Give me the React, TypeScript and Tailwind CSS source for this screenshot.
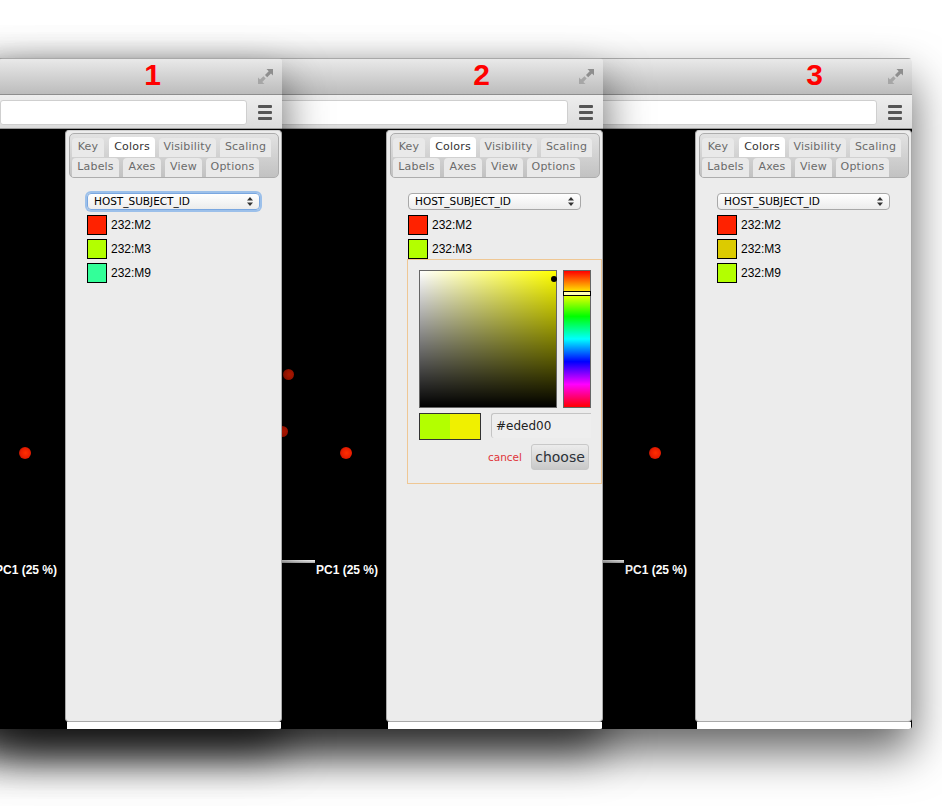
import React from "react";

const tabsTop = [
  { label: "Key", w: "w-[32px]" },
  { label: "Colors", w: "w-[46px]", active: true },
  { label: "Visibility", w: "w-[57px]" },
  { label: "Scaling", w: "w-[51px]" },
];
const tabsBottom = [
  { label: "Labels", w: "w-[47px]" },
  { label: "Axes", w: "w-[38px]" },
  { label: "View", w: "w-[37px]" },
  { label: "Options", w: "w-[53px]" },
];

function Tab({ label, w, active }: { label: string; w: string; active?: boolean }) {
  return (
    <div
      className={`${w} flex shrink-0 items-center justify-center rounded-t-[4px] text-[11px] tracking-[0.2px] ${
        active ? "h-[20px] bg-white text-[#333]" : "h-[19px] bg-[#e9e9e9] text-[#6b6b6b]"
      }`}
    >
      {label}
    </div>
  );
}

function ExpandIcon() {
  return (
    <svg width="15" height="15" viewBox="0 0 15 15" className="shrink-0">
      <path d="M8.5 0H15V6.5L13 4.5L9.2 8.2L7 6L10.7 2.2Z" fill="#8e8e8e" />
      <path d="M0 8.5L2 10.5L5.5 7.2L7.7 9.4L4.3 13L6.5 15H0Z" fill="#a6a6a6" />
    </svg>
  );
}

function Hamburger() {
  return (
    <div className="flex w-[14px] shrink-0 flex-col gap-[3px]">
      <div className="h-[3px] rounded-[1px] bg-[#555]" />
      <div className="h-[3px] rounded-[1px] bg-[#555]" />
      <div className="h-[3px] rounded-[1px] bg-[#555]" />
    </div>
  );
}

function Swatch({ color, label }: { color: string; label: string }) {
  return (
    <div className="flex h-[24px] items-center gap-[4px]">
      <div className={`h-[20px] w-[20px] border border-black ${color}`} />
      <span className="font-['Liberation_Sans',sans-serif] text-[12px] text-black">{label}</span>
    </div>
  );
}

function Picker() {
  return (
    <div className="-mt-[2px] ml-[20px] h-[225px] w-[195px] border border-[#efc794] pl-[11px] pt-[10px]">
      <div className="flex gap-[6px]">
        <div className="relative h-[138px] w-[138px] border border-[#666] bg-[linear-gradient(to_top,#000,transparent),linear-gradient(to_right,#fff,#ff0)]">
          <div className="absolute right-[-1px] top-[5px] h-[6px] w-[6px] rounded-full bg-black" />
        </div>
        <div className="relative h-[138px] w-[28px] border border-[#666] bg-[linear-gradient(#f00,#ff0,#0f0,#0ff,#00f,#f0f,#f00)]">
          <div className="absolute inset-x-[-1px] top-[20px] h-[5px] border border-black bg-[#ffffb0]" />
        </div>
      </div>
      <div className="mt-[5px] flex items-start gap-[10px]">
        <div className="flex h-[27px] w-[62px] border border-[#333]">
          <div className="flex-1 bg-[#b3ff00]" />
          <div className="flex-1 bg-[#f0f000]" />
        </div>
        <div className="flex h-[25px] w-[100px] items-center rounded-l-[3px] border-l border-t border-[#c4c4c4] bg-[#eeeeee] pl-[4px] text-[12px] text-[#222]">
          #eded00
        </div>
      </div>
      <div className="mt-[4px] flex items-center justify-end gap-[9px] pr-[12px]">
        <span className="mt-[1px] text-[10.5px] text-[#e0353a]">cancel</span>
        <div className="flex h-[26px] w-[58px] items-center justify-center rounded-[3px] border border-[#c8c8c8] bg-[linear-gradient(#ececec,#c9c9c9)] text-[14px] text-[#2c3138]">
          choose
        </div>
      </div>
    </div>
  );
}

function Panel({ rows, focused, picker }: { rows: { color: string; label: string }[]; focused?: boolean; picker?: boolean }) {
  return (
    <div className="absolute bottom-0 right-0 top-[1px] flex w-[217px] flex-col font-['DejaVu_Sans',sans-serif]">
      <div className="h-[592px] shrink-0 rounded-[4px] border border-[#a9a9a9] border-t-[#cfcfcf] bg-[#ececec] pt-[2px]">
        <div className="ml-[3px] mr-[2px] flex h-[45px] flex-col overflow-hidden rounded-[5px] border border-[#adadad] bg-[linear-gradient(#e2e2e2,#c2c2c2)] pl-[2px] pt-[3px]">
          <div className="flex items-end gap-[5px]">
            <Tab {...tabsTop[0]} />
            <Tab {...tabsTop[1]} />
            <div className="-ml-[1px] flex items-end gap-[4px]">
              <Tab {...tabsTop[2]} />
              <Tab {...tabsTop[3]} />
            </div>
          </div>
          <div className="mt-[1px] flex gap-[4px]">
            {tabsBottom.map((t) => (
              <Tab key={t.label} {...t} />
            ))}
          </div>
        </div>
        <div
          className="ml-[21px] mt-[15px] flex h-[17px] w-[173px] items-center justify-between rounded-[4px] border border-[#a8a8a8] bg-[linear-gradient(#ffffff,#ececec)] pl-[6px] pr-[6px] text-[10.5px] text-black data-[focused=true]:border-[#7aa7e0] data-[focused=true]:shadow-[0_0_0_2px_#9cc0ea]"
          data-focused={focused ? "true" : "false"}
        >
          HOST_SUBJECT_ID
          <svg width="6" height="9" viewBox="0 0 6 9">
            <path d="M3 0L6 3.5H0Z M3 9L0 5.5H6Z" fill="#333" />
          </svg>
        </div>
        <div className="ml-[21px] mt-[3px] flex flex-col">
          {rows.map((r) => (
            <Swatch key={r.label} {...r} />
          ))}
        </div>
        {picker && <Picker />}
      </div>
      <div className="ml-[2px] mr-[1px] flex-1 bg-white" />
    </div>
  );
}

function Window({
  pos,
  numberGap,
  number,
  rows,
  focused,
  picker,
}: {
  pos: string;
  numberGap: string;
  number: string;
  rows: { color: string; label: string }[];
  focused?: boolean;
  picker?: boolean;
}) {
  return (
    <div className={`absolute top-[58px] flex h-[671px] flex-col overflow-hidden rounded-t-[4px] rounded-br-[3px] shadow-[0_22px_46px_rgba(0,0,0,0.62)] ${pos}`}>
      <div className="flex h-[37px] shrink-0 items-center justify-end border-b border-t border-b-[#8d8d8d] border-t-[#a8a8a8] bg-[linear-gradient(#e9e9e9,#bcbcbc)] pr-[9px]">
        <span className={`-mt-[3px] font-['Liberation_Sans',sans-serif] text-[30px] font-bold leading-none text-[#ff0000] ${numberGap}`}>{number}</span>
        <ExpandIcon />
      </div>
      <div className="flex h-[34px] shrink-0 items-center gap-[11px] border-b border-[#9a9a9a] bg-[linear-gradient(#eeeeee,#dcdcdc)] pr-[10px] pt-[1px]">
        <div className="h-[25px] flex-1 rounded-[3px] border border-[#cfcfcf] bg-white" />
        <Hamburger />
      </div>
      <div className="relative flex-1 bg-black">
        <div className="absolute right-[251px] top-[318px] h-[12px] w-[12px] rounded-full bg-[radial-gradient(circle_at_55%_50%,#ff3000_0%,#e81c00_55%,#8a1000_100%)]" />
        <div className="absolute right-[309px] top-[240px] h-[11px] w-[11px] rounded-full bg-[radial-gradient(circle_at_55%_50%,#e02000_0%,#c01800_55%,#701000_100%)]" />
        <div className="absolute right-[315px] top-[297px] h-[11px] w-[11px] rounded-full bg-[radial-gradient(circle_at_55%_50%,#f02000_0%,#d01800_55%,#801000_100%)]" />
        <div className="absolute right-[288px] top-[431px] h-[3px] w-[120px] bg-[linear-gradient(#ffffff,#b0b0b0)]" />
        <span className="absolute right-[225px] top-[432px] whitespace-nowrap font-['Liberation_Sans',sans-serif] text-[12px] font-bold text-white">
          PC1 (25 %)
        </span>
        <Panel rows={rows} focused={focused} picker={picker} />
      </div>
    </div>
  );
}

export default function App() {
  return (
    <div className="relative h-[811px] w-[942px] overflow-hidden bg-white">
      <Window
        pos="left-[-40px] w-[952px]"
        numberGap="mr-[65px]"
        number="3"
        rows={[
          { color: "bg-[#ff2200]", label: "232:M2" },
          { color: "bg-[#dccb00]", label: "232:M3" },
          { color: "bg-[#b3ff00]", label: "232:M9" },
        ]}
      />
      <Window
        pos="left-[-40px] w-[643px]"
        numberGap="mr-[89px]"
        number="2"
        picker
        rows={[
          { color: "bg-[#ff2200]", label: "232:M2" },
          { color: "bg-[#b3ff00]", label: "232:M3" },
        ]}
      />
      <Window
        pos="left-0 w-[282px]"
        numberGap="mr-[97px]"
        number="1"
        focused
        rows={[
          { color: "bg-[#ff2200]", label: "232:M2" },
          { color: "bg-[#b3ff00]", label: "232:M3" },
          { color: "bg-[#33ff99]", label: "232:M9" },
        ]}
      />
    </div>
  );
}
